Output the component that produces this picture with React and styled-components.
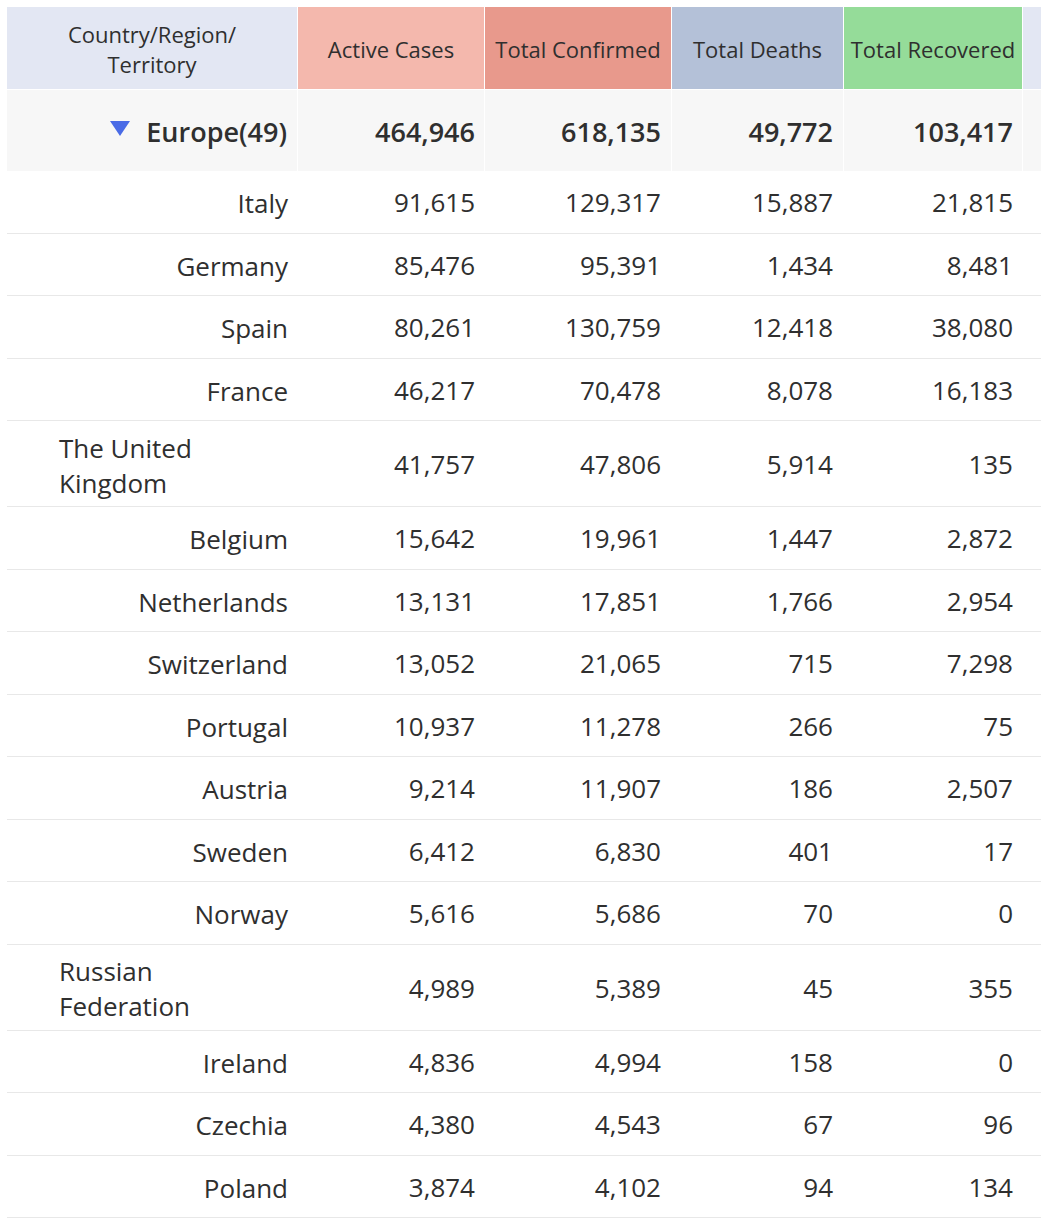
import React from "react";
import styled, { createGlobalStyle } from "styled-components";

const GlobalStyle = createGlobalStyle`
  html, body {
    margin: 0;
    padding: 0;
    background: #ffffff;
    overflow: hidden;
  }
  body {
    font-family: "Open Sans", "Noto Sans", "Liberation Sans", sans-serif;
    color: #333333;
  }
`;

const COLS = "290px 186px 186px 171px 178px 1fr";

const Page = styled.div`
  padding: 7px 0 0 7px;
  width: 1041px;
  box-sizing: border-box;
`;

const Table = styled.div`
  display: flex;
  flex-direction: column;
`;

const HeaderRow = styled.div`
  display: grid;
  grid-template-columns: ${COLS};
  column-gap: 1px;
  height: 82px;
  margin-bottom: 1px;
  background: #ffffff;
`;

const HeaderCell = styled.div`
  display: flex;
  align-items: center;
  justify-content: center;
  text-align: center;
  background: ${(p) => p.$bg};
  font-size: 22px;
  font-weight: 500;
  line-height: 30px;
  color: #2f2f2f;
  white-space: nowrap;
  padding-top: 2px;
`;

const GroupRow = styled.div`
  display: grid;
  grid-template-columns: ${COLS};
  column-gap: 1px;
  height: 81px;
  background: #ffffff;
`;

const GroupCell = styled.div`
  display: flex;
  align-items: center;
  justify-content: flex-end;
  background: #f7f7f7;
  padding: 2px ${(p) => p.$pr || 9}px 0 0;
  font-size: 27px;
  font-weight: 600;
  color: #2f2f2f;
`;

const GroupName = styled.div`
  display: flex;
  align-items: center;
  gap: 16px;
  padding-right: 1px;
`;

const Caret = styled.span`
  display: inline-block;
  width: 0;
  height: 0;
  border-left: 10.5px solid transparent;
  border-right: 10.5px solid transparent;
  border-top: 15px solid #4a6be6;
  margin-top: -6px;
`;

const DataRow = styled.div`
  display: grid;
  grid-template-columns: ${COLS};
  column-gap: 1px;
  min-height: 61.5px;
  border-bottom: 1px solid #e8e8e8;
  align-items: center;
`;

const CountryCell = styled.div`
  display: flex;
  justify-content: flex-end;
  padding: 9.5px 9px 5.5px 52px;
  font-size: 26px;
  line-height: 35px;
  color: #2f2f2f;
`;

const NumCell = styled.div`
  text-align: right;
  padding: 2px ${(p) => p.$pr || 9}px 0 0;
  font-size: 26px;
  line-height: 35px;
  color: #2f2f2f;
`;

const headers = [
  { label: "Active Cases", bg: "#f4b8ad" },
  { label: "Total Confirmed", bg: "#e8998c" },
  { label: "Total Deaths", bg: "#b4c1d8" },
  { label: "Total Recovered", bg: "#95dc99" },
];

const rows = [
  ["Italy", "91,615", "129,317", "15,887", "21,815"],
  ["Germany", "85,476", "95,391", "1,434", "8,481"],
  ["Spain", "80,261", "130,759", "12,418", "38,080"],
  ["France", "46,217", "70,478", "8,078", "16,183"],
  ["The United Kingdom", "41,757", "47,806", "5,914", "135"],
  ["Belgium", "15,642", "19,961", "1,447", "2,872"],
  ["Netherlands", "13,131", "17,851", "1,766", "2,954"],
  ["Switzerland", "13,052", "21,065", "715", "7,298"],
  ["Portugal", "10,937", "11,278", "266", "75"],
  ["Austria", "9,214", "11,907", "186", "2,507"],
  ["Sweden", "6,412", "6,830", "401", "17"],
  ["Norway", "5,616", "5,686", "70", "0"],
  ["Russian Federation", "4,989", "5,389", "45", "355"],
  ["Ireland", "4,836", "4,994", "158", "0"],
  ["Czechia", "4,380", "4,543", "67", "96"],
  ["Poland", "3,874", "4,102", "94", "134"],
];

const pads = [9, 10, 10, 9];
const totals = ["464,946", "618,135", "49,772", "103,417"];

export default function App() {
  return (
    <>
      <GlobalStyle />
      <Page>
        <Table>
          <HeaderRow>
            <HeaderCell $bg="#e3e7f3">
              Country/Region/
              <br />
              Territory
            </HeaderCell>
            {headers.map((h) => (
              <HeaderCell key={h.label} $bg={h.bg}>
                {h.label}
              </HeaderCell>
            ))}
            <HeaderCell $bg="#e3e7f3" />
          </HeaderRow>
          <GroupRow>
            <GroupCell>
              <GroupName>
                <Caret />
                <span>Europe(49)</span>
              </GroupName>
            </GroupCell>
            {totals.map((t, i) => (
              <GroupCell key={t} $pr={pads[i]}>
                {t}
              </GroupCell>
            ))}
            <GroupCell />
          </GroupRow>
          {rows.map(([name, ...nums]) => (
            <DataRow key={name}>
              <CountryCell>
                <span>{name}</span>
              </CountryCell>
              {nums.map((n, i) => (
                <NumCell key={i} $pr={pads[i]}>
                  {n}
                </NumCell>
              ))}
              <div />
            </DataRow>
          ))}
        </Table>
      </Page>
    </>
  );
}
